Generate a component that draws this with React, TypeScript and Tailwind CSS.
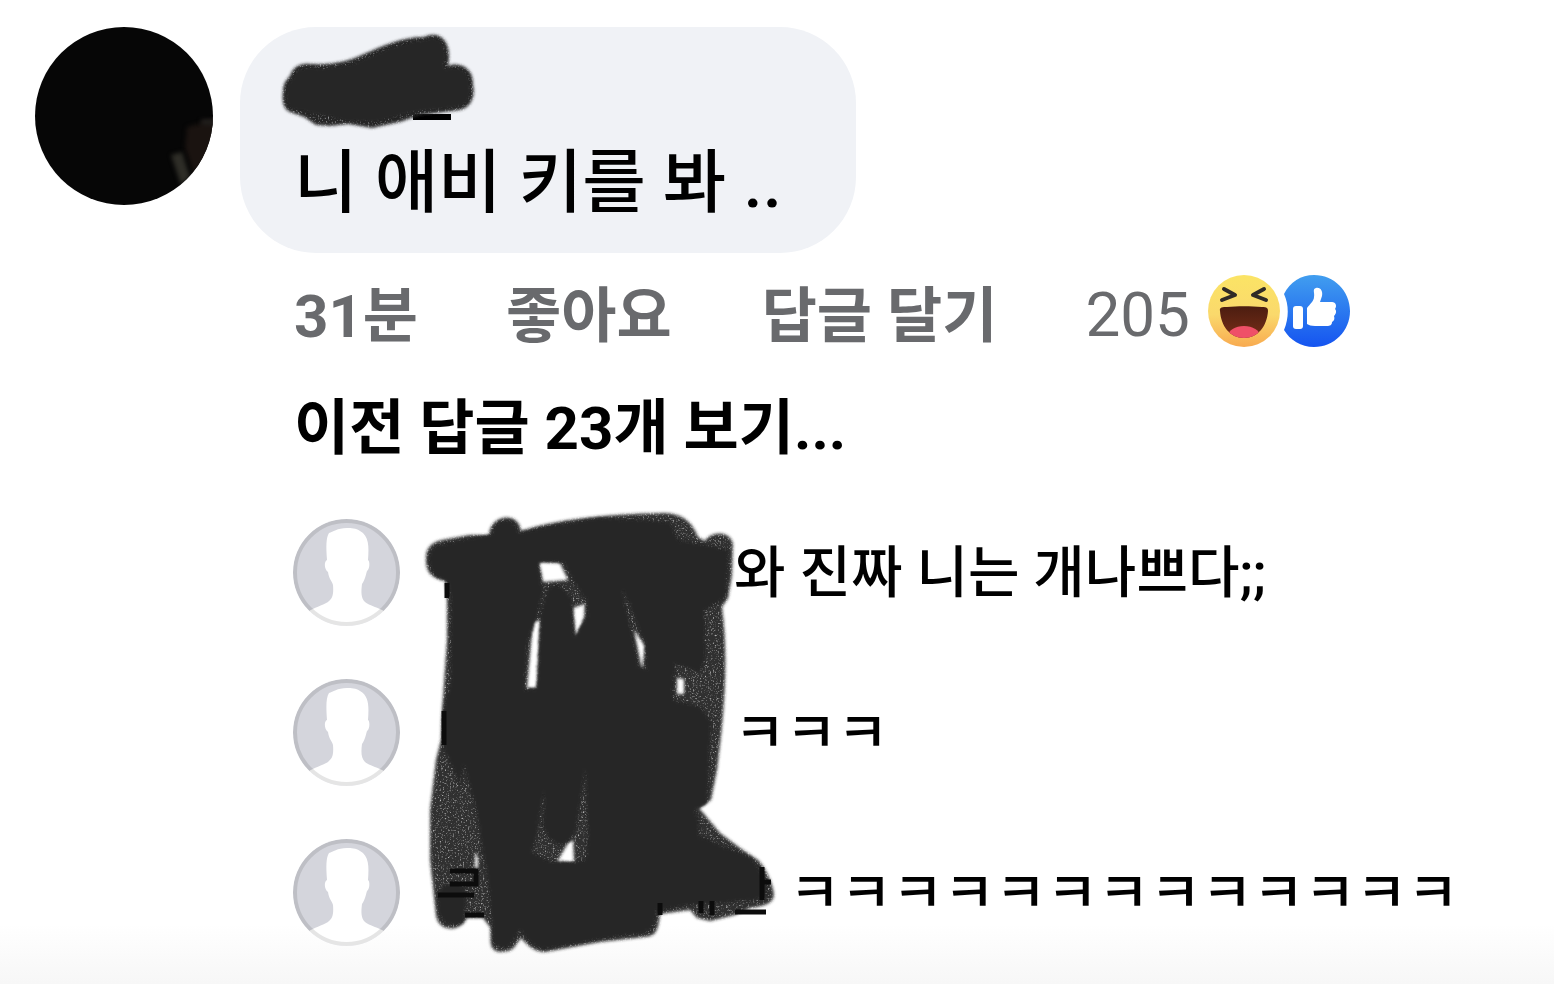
import type { ReactNode } from 'react';

const replies = [
  { id: 1, text: '와 진짜 니는 개나쁘다;;', nameWidth: 'w-[334px]' },
  { id: 2, text: 'ㅋㅋㅋ', nameWidth: 'w-[334px]' },
  { id: 3, text: 'ㅋㅋㅋㅋㅋㅋㅋㅋㅋㅋㅋㅋㅋ', nameWidth: 'w-[389px]' },
];

// Marker texture shared by both scribbles
function MarkerFilters() {
  return (
    <svg width="0" height="0" className="absolute" aria-hidden="true">
      <defs>
        <filter id="grain" x="-5%" y="-5%" width="110%" height="110%">
          <feGaussianBlur in="SourceGraphic" stdDeviation="1.4" result="soft" />
          <feTurbulence type="fractalNoise" baseFrequency="0.6" numOctaves="2" seed="4" result="noise" />
          <feColorMatrix in="noise" type="matrix" values="0 0 0 0 0  0 0 0 0 0  0 0 0 0 0  0 0 0 -2 2.1" result="specks" />
          <feComposite in="soft" in2="specks" operator="in" />
        </filter>
        <filter id="rough" x="-5%" y="-5%" width="110%" height="110%">
          <feTurbulence type="fractalNoise" baseFrequency="0.5" numOctaves="2" seed="8" result="noise" />
          <feDisplacementMap in="SourceGraphic" in2="noise" scale="6" xChannelSelector="R" yChannelSelector="G" result="moved" />
          <feGaussianBlur in="moved" stdDeviation="0.9" />
        </filter>
      </defs>
    </svg>
  );
}

function NameScribble() {
  return (
    <svg viewBox="280 30 200 102" className="block h-[102px] w-[200px]" aria-hidden="true">
      <path d="M413 114h38v6h-38z" fill="#000" />
      <path
        filter="url(#grain)"
        fill="#262626"
        d="M283 92C283 84 286 80 290 76C293 67 300 63 310 64C335 65 349 61 364 54C385 45 402 37 424 37C440 29 453 42 448 66C462 61 474 70 473 85C476 97 470 108 460 110L420 115L400 122L372 128L348 124L330 126L316 125L304 117L290 112C283 109 282 101 283 92Z"
      />
      <path
        filter="url(#rough)"
        fill="#262626"
        d="M286 92C286 84 289 82 293 77C296 69 302 67 312 68C337 69 350 65 366 58C388 49 404 41 424 40C440 33 449 45 444 69C460 64 471 71 470 86C472 98 467 105 459 107L414 112L376 122L346 121L325 116L292 109C286 106 285 100 286 92Z"
      />
    </svg>
  );
}

function RepliesScribble() {
  return (
    <svg viewBox="420 505 360 455" className="absolute -top-3.5 left-[127px] h-[455px] w-[360px]" aria-hidden="true">
      <path
        filter="url(#grain)"
        fill="#262626"
        fillOpacity="0.96"
        fillRule="evenodd"
        d="M426 560C425 547 433 541 447 539L470 535H489C490 514 519 511 521 531C565 517 618 514 665 513C682 514 692 521 698 537L705 541C711 531 730 530 733 544L732 575L728 598L722 607C729 660 724 716 717 770L711 800L699 808L720 833L740 848L758 860C766 868 773 884 774 895C773 903 766 906 750 908L735 915L710 921L697 918L690 910L660 914C658 934 654 936 645 937L600 942L545 952C535 952 528 946 521 938C514 947 514 952 500 952C487 950 492 940 490 927L483 918H467C460 933 438 932 436 915L430 860V810L436 760L441 740L442 712L447 640V600L445 580C434 579 426 574 426 560ZM539 562L543 582L568 580L560 563ZM533 622L527 688H537L540 620ZM573 608L576 638L584 618L585 604ZM634 630L642 670L645 646ZM677 678V694L684 694V679ZM568 843L557 862H574L573 840ZM475 852V868H478V858Z"
      />
      <path
        filter="url(#rough)"
        fill="#262626"
        fillRule="evenodd"
        d="M429 560C428 548 437 544 449 543L470 538L492 535C493 517 517 515 518 533L550 526L600 518L645 520L670 522L678 540L705 545L728 550V571L725 599L714 604L705 610V660L700 672L675 664L673 700L700 707L711 722L709 760L707 804L695 810L699 822L698 835L725 847L752 858L767 883V894L756 900L728 902L684 905L656 912C656 928 649 934 639 934L600 939L545 949C531 947 524 936 520 930C511 947 505 949 499 947C490 945 493 932 492 922L487 874L476 810L464 765L460 785L443 746V712L451 680V596L447 581C435 579 430 572 429 560ZM538 562L541 582L544 588L537 618L528 640L524 690L537 688L541 610L548 588L558 584L572 598L574 638L587 616L586 600L576 585L563 562ZM622 588L639 667L647 670L645 644ZM544 790L537 833L532 852L550 862L577 862L586 859L588 832L585 770L576 830L568 842L560 845L550 840L543 827Z"
      />
      <path filter="url(#rough)" fill="#262626" d="M437 892L453 880L465 888V918C461 929 440 927 438 910Z" />
      {/* letter parts left uncovered by the marker */}
      <g fill="none" stroke="#0c0c0c" strokeWidth="5">
        <path d="M444 711V745M447 583V598M450 871H476V884H450M438 895H474M465 915H484" />
        <path d="M660 903V915M701 901V913M712 901V915M762 867V900M762 882H771M735 912H766" />
      </g>
    </svg>
  );
}

function ProfilePhoto() {
  return (
    <svg viewBox="0 0 178 178" className="size-[178px] shrink-0" role="img" aria-label="프로필 사진">
      <defs>
        <clipPath id="photo">
          <circle cx="89" cy="89" r="89" />
        </clipPath>
        <filter id="photoBlur" x="-50%" y="-50%" width="200%" height="200%" colorInterpolationFilters="sRGB">
          <feGaussianBlur stdDeviation="2" />
        </filter>
      </defs>
      <g clipPath="url(#photo)">
        <rect width="178" height="178" fill="#060606" />
        <path d="M152 100L182 92V135L160 150L150 121Z" fill="#1a1310" filter="url(#photoBlur)" />
        <path d="M136 128L147 125L155 150L146 158Z" fill="#2e2d27" filter="url(#photoBlur)" />
        <path d="M166 92H180V98H166Z" fill="#211e1c" filter="url(#photoBlur)" />
      </g>
    </svg>
  );
}

function DefaultAvatar({ id }: { id: number }) {
  const clip = `avatar-${id}`;
  return (
    <svg viewBox="0 0 107 107" className="size-[107px] shrink-0" aria-hidden="true">
      <clipPath id={clip}>
        <circle cx="53.5" cy="53.5" r="53.5" />
      </clipPath>
      <g clipPath={`url(#${clip})`}>
        <rect width="107" height="107" fill="#d4d5dc" />
        <path
          fill="#fff"
          d="M54 9C44 9 40 13 36 14C33 19 33 27 34 41C31 42 31 50 35 53C36 60 39 62 40 66C41 79 38 80 35 83C29 87 21 88 15 93V107H92V93C86 88 76 87 72 83C68 79 68 73 69 65C72 61 73 55 74 52C77 50 77 42 75 41C76 27 76 17 67 12C63 9 58 9 54 9Z"
        />
        <circle cx="53.5" cy="53.5" r="51.5" fill="none" stroke="#000" strokeOpacity="0.1" strokeWidth="4" />
      </g>
    </svg>
  );
}

function HahaIcon() {
  return (
    <svg viewBox="0 0 72 72" className="size-[72px]" aria-hidden="true">
      <defs>
        <linearGradient id="face" x1="0" y1="0" x2="0" y2="1">
          <stop offset="0" stopColor="#fbe465" />
          <stop offset="0.55" stopColor="#fad96c" />
          <stop offset="1" stopColor="#f8aa50" />
        </linearGradient>
        <linearGradient id="mouth" x1="0" y1="0" x2="0" y2="1">
          <stop offset="0" stopColor="#4a1d10" />
          <stop offset="1" stopColor="#782e18" />
        </linearGradient>
        <clipPath id="mouthClip">
          <path d="M12 36C11 32 15 32 19 32C29 31 43 31 54 32C59 32 60 33 60 36C59 51 50 63 36 63C22 63 13 51 12 36Z" />
        </clipPath>
      </defs>
      <circle cx="36" cy="36" r="36" fill="url(#face)" />
      <g clipPath="url(#mouthClip)">
        <rect x="10" y="30" width="52" height="34" fill="url(#mouth)" />
        <ellipse cx="36" cy="61" rx="16" ry="10" fill="#ef5068" />
      </g>
      <path
        d="M16 14L27 20L14 25M56 14L45 20L58 25"
        fill="none"
        stroke="#302b26"
        strokeWidth="4"
        strokeLinecap="round"
        strokeLinejoin="round"
      />
    </svg>
  );
}

function LikeIcon() {
  return (
    <svg viewBox="0 0 66 72" className="h-[72px] w-[66px]" aria-hidden="true">
      <defs>
        <linearGradient id="like" x1="0" y1="0" x2="0" y2="1">
          <stop offset="0" stopColor="#419eef" />
          <stop offset="1" stopColor="#1554f0" />
        </linearGradient>
      </defs>
      <path d="M0 19C6 7 17 0 30 0C50 0 66 16 66 36S50 72 30 72C17 72 6 65 0 55C5 43 5 30 0 19Z" fill="url(#like)" />
      <rect x="9" y="31" width="10" height="23" rx="3" fill="#fff" />
      <path
        fill="#fff"
        d="M23 33C26 29 30 26 30 22C31 18 28 14 32 13C37 12 39 17 38 21L36 27H48C52 27 53 31 51 34C53 36 52 39 50 41C51 44 50 46 48 47C48 50 46 51 43 51H31C27 51 25 50 23 49Z"
      />
    </svg>
  );
}

function Action({ children }: { children: ReactNode }) {
  return (
    <button type="button" className="font-bold">
      {children}
    </button>
  );
}

export default function App() {
  return (
    <div className="min-h-screen overflow-x-hidden bg-linear-to-t from-[#f7f7f7] to-white to-[60px] font-[Roboto,'Noto_Sans_CJK_KR',sans-serif] text-black">
      <MarkerFilters />
      <main className="flex items-start gap-[27px] pt-[27px] pl-[35px]">
        <ProfilePhoto />
        <div className="min-w-0 flex-1">
          <article className="h-[226px] w-fit rounded-[76px] bg-[#f0f2f6] pt-[3px] pr-[74px] pl-10">
            <NameScribble />
            <p className="pl-3.5 text-[69px] leading-[104px] font-medium whitespace-nowrap">니 애비 키를 봐 ..</p>
          </article>

          <div className="mt-[22px] flex h-[72px] items-center pl-[54px] text-[60px] whitespace-nowrap text-[#696a6d]">
            <span className="pt-3 leading-[72px] font-bold">31분</span>
            <div className="ml-[88px] flex gap-[90px] pt-3 leading-[72px]">
              <Action>좋아요</Action>
              <Action>답글 달기</Action>
            </div>
            <button type="button" className="ml-[88px] flex items-center">
              <span className="mr-[18px] pt-2 text-[62px] leading-[72px]">205</span>
              <HahaIcon />
              <span className="ml-1">
                <LikeIcon />
              </span>
            </button>
          </div>

          <button type="button" className="mt-[46px] ml-[54px] block text-[60px] leading-[72px] font-bold whitespace-nowrap">
            이전 답글 23개 보기...
          </button>

          <div className="relative mt-[54px] ml-[53px]">
            <ul className="flex flex-col gap-[53px]">
              {replies.map((reply) => (
                <li key={reply.id} className="flex items-center">
                  <DefaultAvatar id={reply.id} />
                  <span className={`${reply.nameWidth} shrink-0`} />
                  <p className="text-[56px] leading-[72px] font-medium whitespace-nowrap">{reply.text}</p>
                </li>
              ))}
            </ul>
            <RepliesScribble />
          </div>
        </div>
      </main>
    </div>
  );
}
